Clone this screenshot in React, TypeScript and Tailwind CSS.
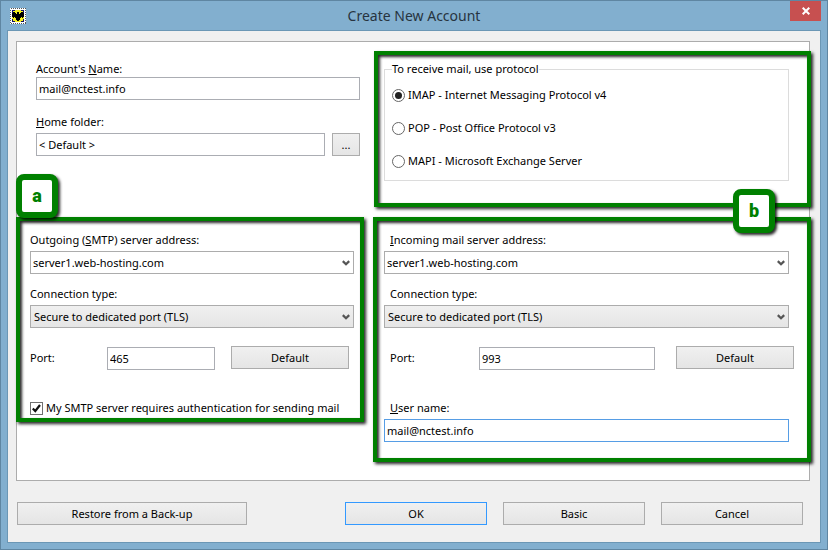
import { useState, type ReactNode } from 'react';
import clsx from 'clsx';

const fieldClass = 'h-[23px] min-w-0 border border-[#abadb3] bg-white px-0.5 text-[11px] text-black outline-none';
const buttonClass = 'h-[23px] border border-[#acacac] bg-linear-to-b from-[#f0f0f0] to-[#e5e5e5] text-center text-[11px] leading-4 text-black';
const groupClass = 'relative border-4 border-[#008000] shadow-[2px_2px_3px_rgba(0,0,0,0.85),inset_2px_2px_3px_rgba(0,0,0,0.85)]';

const protocols = [
  { id: 'imap', label: 'IMAP - Internet Messaging Protocol v4' },
  { id: 'pop', label: 'POP - Post Office Protocol v3' },
  { id: 'mapi', label: 'MAPI - Microsoft Exchange Server' },
];

function BatIcon() {
  return (
    <svg className="size-4" viewBox="0 0 16 16" shapeRendering="crispEdges" aria-hidden="true">
      <rect width="16" height="16" fill="#fff" />
      <rect x="0.5" y="0.5" width="15" height="15" fill="none" stroke="#555" strokeDasharray="1 1" />
      <rect x="2" y="2" width="12" height="12" fill="#10106a" />
      <path d="M5 2h6v1h2v2h1v6h-1v2h-2v1H5v-1H3v-2H2V5h1V3h2z" fill="#f4f01c" />
      <path d="M2 5h1V4h2v1h1v1h1V4h2v2h1V5h1V4h2v1h1v4h-1v1h-1V9h-1v1h-1v2H9v1H7v-1H6v-2H5V9H4v1H3V9H2z" fill="#000" />
    </svg>
  );
}

function Badge({ children, className }: { children: ReactNode; className: string }) {
  return (
    <span
      className={clsx(
        'absolute flex h-11 w-[42px] items-center justify-center rounded-lg border-6 border-[#008000] bg-white font-[Roboto,sans-serif] text-lg leading-5 font-black text-[#008000] shadow-[2px_2px_3px_rgba(0,0,0,0.85)]',
        className,
      )}
    >
      {children}
    </span>
  );
}

function Combo({ id, value, filled }: { id: string; value: string; filled?: boolean }) {
  return (
    <div className="relative flex">
      <select
        id={id}
        className={clsx(
          'h-[23px] w-full appearance-none border border-[#acacac] text-[11px] text-black outline-none',
          filled ? 'bg-linear-to-b from-[#f0f0f0] to-[#e5e5e5] px-[3px]' : 'bg-white px-0.5',
        )}
      >
        <option>{value}</option>
      </select>
      <svg className="pointer-events-none absolute top-2 right-1 h-2 w-2" viewBox="0 0 8 8" fill="none" aria-hidden="true">
        <path d="M0.8 2.1 4 5.3 7.2 2.1" stroke="#555" strokeWidth="2.2" />
      </svg>
    </div>
  );
}

export default function App() {
  const [protocol, setProtocol] = useState('imap');
  const [auth, setAuth] = useState(true);

  return (
    <div className="flex min-h-screen flex-col border border-[#5f86a2] bg-[#82afcf] px-1.5 pb-1.5 font-['Noto_Sans','Open_Sans',sans-serif] text-[11px] leading-4 text-black">
      <header className="grid h-[29px] grid-cols-[1fr_auto_1fr] items-center">
        <div className="pl-[3px]">
          <BatIcon />
        </div>
        <h1 className="text-sm text-[#27343f]">Create New Account</h1>
        <button aria-label="Close" className="flex h-5 w-[31px] items-center justify-center self-start justify-self-end bg-[#c75050]">
          <svg className="size-2" viewBox="0 0 8 8" aria-hidden="true">
            <path d="M0.7 0.7 7.3 7.3M7.3 0.7 0.7 7.3" stroke="#fff" strokeWidth="2" />
          </svg>
        </button>
      </header>

      <main className="flex flex-1 flex-col border border-[#6b97b5] bg-[#f0f0f0] pt-2.5 pr-2.5 pb-[17px] pl-2">
        <div className="flex-1 border border-[#acacac] bg-white pb-[18px]">
          <div className="-mr-0.5 -ml-px grid grid-cols-[minmax(0,348fr)_minmax(0,438fr)] items-start gap-x-[9px]">
            <section className="pt-[19px] pr-1 pl-5">
              <label htmlFor="account" className="block">Account's <u>N</u>ame:</label>
              <input id="account" className={clsx(fieldClass, 'block w-full')} defaultValue="mail@nctest.info" />
              <label htmlFor="home" className="mt-3.5 mb-[3px] block"><u>H</u>ome folder:</label>
              <div className="flex gap-[7px]">
                <input id="home" className={clsx(fieldClass, 'flex-1')} defaultValue="< Default >" />
                <button className={clsx(buttonClass, 'w-7')}>...</button>
              </div>
            </section>

            <section className="pt-[9px] pb-2.5 pl-px">
              <div className={clsx(groupClass, 'pt-1.5 pr-[18px] pb-[22px] pl-1.5')}>
                <fieldset className="border border-[#dcdcdc] px-[7px] pb-[11px]">
                  <legend>To receive mail, use protocol</legend>
                  <div className="flex flex-col gap-[17px] pt-2.5">
                    {protocols.map((p) => (
                      <label key={p.id} className="flex items-center gap-[3px]">
                        <input
                          type="radio"
                          name="protocol"
                          checked={protocol === p.id}
                          onChange={() => setProtocol(p.id)}
                          className="grid size-[13px] appearance-none place-content-center rounded-full border border-[#666] bg-white before:size-[7px] before:rounded-full checked:before:bg-[#222]"
                        />
                        {p.label}
                      </label>
                    ))}
                  </div>
                </fieldset>
              </div>
            </section>

            <section className={clsx(groupClass, 'pt-[11px] pr-1.5 pb-0.5 pl-2.5')}>
              <Badge className="-top-[47px] -left-1">a</Badge>
              <label htmlFor="smtp" className="mb-[3px] block">Outgoing (<u>S</u>MTP) server address:</label>
              <Combo id="smtp" value="server1.web-hosting.com" />
              <label htmlFor="smtp-type" className="mt-3 mb-[3px] block">Connection type:</label>
              <Combo id="smtp-type" value="Secure to dedicated port (TLS)" filled />
              <div className="mt-[18px] flex h-6 items-start pr-[5px]">
                <label htmlFor="smtp-port" className="w-[77px] self-center">Port:</label>
                <input id="smtp-port" className={clsx(fieldClass, 'mr-4 flex-1 self-end')} defaultValue="465" />
                <button className={clsx(buttonClass, 'w-[118px]')}>Default</button>
              </div>
              <label className="mt-[30px] flex items-center gap-[3px] whitespace-nowrap">
                <span className="relative flex">
                  <input
                    type="checkbox"
                    checked={auth}
                    onChange={(e) => setAuth(e.target.checked)}
                    className="peer size-[13px] appearance-none border border-[#707070] bg-white"
                  />
                  <svg className="pointer-events-none absolute inset-0 hidden size-[13px] peer-checked:block" viewBox="0 0 13 13" fill="none" aria-hidden="true">
                    <path d="M2.8 6.4 5.3 9 10 3" stroke="#111" strokeWidth="2.2" />
                  </svg>
                </span>
                My SMTP server requires authentication for sending mail
              </label>
            </section>

            <section className={clsx(groupClass, 'pt-[11px] pr-[18px] pb-4 pl-[7px]')}>
              <Badge className="-top-8 right-8">b</Badge>
              <label htmlFor="incoming" className="mb-[3px] block pl-1.5"><u>I</u>ncoming mail server address:</label>
              <Combo id="incoming" value="server1.web-hosting.com" />
              <label htmlFor="incoming-type" className="mt-3 mb-[3px] block pl-1.5">Connection type:</label>
              <Combo id="incoming-type" value="Secure to dedicated port (TLS)" filled />
              <div className="mt-[18px] -mr-[5px] flex h-6 items-start pl-1.5">
                <label htmlFor="incoming-port" className="w-[89px] self-center">Port:</label>
                <input id="incoming-port" className={clsx(fieldClass, 'mr-[21px] flex-1 self-end')} defaultValue="993" />
                <button className={clsx(buttonClass, 'w-[118px]')}>Default</button>
              </div>
              <label htmlFor="user" className="mt-[30px] mb-[3px] block pl-1.5"><u>U</u>ser name:</label>
              <input id="user" className="block h-[23px] w-full border border-[#569de5] bg-white px-0.5 text-[11px] outline-none" defaultValue="mail@nctest.info" />
            </section>
          </div>
        </div>

        <footer className="mt-[21px] flex gap-4 pr-[7px] pl-px">
          <button className={clsx(buttonClass, 'mr-auto w-[230px]')}>Restore from a Back-up</button>
          <button className="h-[23px] w-[142px] border border-[#3399ff] bg-linear-to-b from-[#f0f0f0] to-[#e5e5e5] text-[11px] leading-4">OK</button>
          <button className={clsx(buttonClass, 'w-[142px]')}>Basic</button>
          <button className={clsx(buttonClass, 'w-[142px]')}>Cancel</button>
        </footer>
      </main>
    </div>
  );
}
